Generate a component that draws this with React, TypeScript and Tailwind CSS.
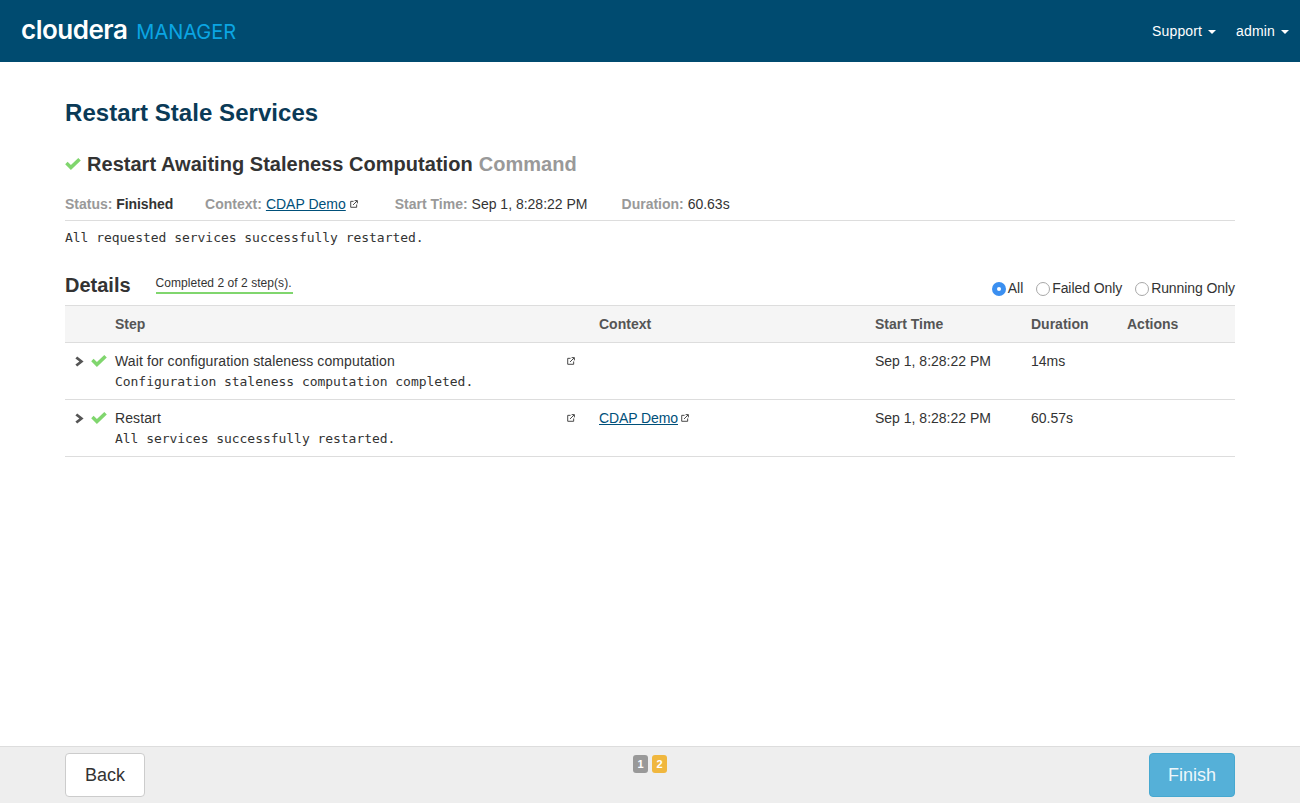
import React from 'react';

const rowGrid = 'grid grid-cols-[50px_484px_276px_156px_96px_108px]';
const mono = { fontFamily: '"DejaVu Sans Mono", monospace' };

const Check = ({ className }: { className: string }) => (
    <svg viewBox="0 0 16 12" className={className} fill="currentColor">
        <path d="M0.2 6.2 L2.6 3.8 L5.9 7 L13.3 0 L15.8 2.4 L5.9 12 Z" />
    </svg>
);

const Chevron = () => (
    <svg viewBox="0 0 9 11" className="h-[11px] w-[9px] text-[#555555]" fill="currentColor">
        <path d="M2.2 0.4 L8.6 5.5 L2.2 10.6 L0.4 8.4 L4.4 5.5 L0.4 2.6 Z" />
    </svg>
);

const ExternalLink = ({ className }: { className: string }) => (
    <svg viewBox="0 0 9 9" className={className} fill="none" stroke="currentColor" strokeWidth="1">
        <path d="M4 1.5 H0.8 V8.2 H7.5 V5" />
        <path d="M3.4 5.6 L8 1" />
        <path d="M5.2 0.7 H8.3 V3.8" />
    </svg>
);

const Caret = () => <span className="ml-[6px] inline-block border-x-[4px] border-t-[4px] border-x-transparent border-t-white align-middle" />;

const Radio = ({ label, checked }: { label: string; checked?: boolean }) => (
    <label className="flex items-center">
        {checked ? (
            <span className="flex h-[14px] w-[14px] items-center justify-center rounded-full bg-[#3b8ff0]">
                <span className="h-[4px] w-[4px] rounded-full bg-white" />
            </span>
        ) : (
            <span className="h-[14px] w-[14px] rounded-full border border-[#a8a8a8] bg-white" />
        )}
        <span className="ml-[2px] tracking-[-0.08px]">{label}</span>
    </label>
);

interface Step {
    name: string;
    message: string;
    context?: string;
    duration: string;
}

const steps: Step[] = [
    { name: 'Wait for configuration staleness computation', message: 'Configuration staleness computation completed.', duration: '14ms' },
    { name: 'Restart', message: 'All services successfully restarted.', context: 'CDAP Demo', duration: '60.57s' },
];

const Meta = ({ label, value, className }: { label: string; value: React.ReactNode; className?: string }) => (
    <span className={className}>
        <b className="font-bold text-[#999999]">{label}</b> {value}
    </span>
);

export default function App() {
    return (
        <div className="flex h-screen flex-col overflow-hidden bg-white text-[14px] text-[#333333]" style={{ fontFamily: '"Liberation Sans", Arial, sans-serif' }}>
            <header className="flex h-[62px] shrink-0 items-center justify-between bg-[#004b70] pl-[21px] pr-[11px]">
                <div className="flex items-baseline pb-[4px]" style={{ fontFamily: 'Inter, sans-serif' }}>
                    <span className="text-[26px] font-semibold tracking-[-0.5px] text-white">cloudera</span>
                    <span className="ml-[9px] text-[20px] text-[#0ba5e3]">MANAGER</span>
                </div>
                <nav className="flex items-center tracking-[0.15px] text-white">
                    <span>Support<Caret /></span>
                    <span className="ml-[20px]">admin<Caret /></span>
                </nav>
            </header>

            <main className="flex-1 px-[65px]">
                <h1 className="mt-[36px] text-[24px] leading-[30px] font-bold tracking-[0.05px] text-[#0a3a57]">Restart Stale Services</h1>

                <h2 className="mt-[21px] flex items-center text-[20px] leading-[30px] font-bold tracking-[0.03px]">
                    <Check className="mr-[6px] h-[12px] w-[16px] text-[#80d66e]" />
                    Restart Awaiting Staleness Computation
                    <span className="ml-[6px] text-[#999999]">Command</span>
                </h2>

                <div className="mt-[11px] flex h-[31px] items-center border-b border-[#dddddd] pb-[2px]">
                    <Meta label="Status:" value={<b className="font-bold tracking-[-0.1px]">Finished</b>} />
                    <Meta
                        label="Context:"
                        className="ml-[32px] flex items-center gap-[4px]"
                        value={
                            <>
                                <a className="text-[#00507a] underline">CDAP Demo</a>
                                <ExternalLink className="h-[8px] w-[8px]" />
                            </>
                        }
                    />
                    <Meta label="Start Time:" value="Sep 1, 8:28:22 PM" className="ml-[37px]" />
                    <Meta label="Duration:" value="60.63s" className="ml-[34px]" />
                </div>

                <p className="mt-[8px] text-[13px] leading-[18px] tracking-[-0.03px]" style={mono}>All requested services successfully restarted.</p>

                <div className="mt-[16px] flex h-[42px] items-center justify-between pb-[1px]">
                    <div className="flex items-center">
                        <h3 className="pt-[2px] text-[20px] font-bold">Details</h3>
                        <span className="mt-[3px] ml-[25px] border-b-2 border-[#80d66e] pr-[1px] pb-[2px] text-[12px] leading-[14px] tracking-[0.05px]">Completed 2 of 2 step(s).</span>
                    </div>
                    <div className="flex items-center gap-[13px] pt-[10px]">
                        <Radio label="All" checked />
                        <Radio label="Failed Only" />
                        <Radio label="Running Only" />
                    </div>
                </div>

                <div className={`${rowGrid} h-[38px] items-center border-y border-[#dddddd] bg-[#f5f5f5] font-bold text-[#555555]`}>
                    <span />
                    <span>Step</span>
                    <span>Context</span>
                    <span>Start Time</span>
                    <span>Duration</span>
                    <span>Actions</span>
                </div>

                {steps.map((step) => (
                    <div key={step.name} className={`${rowGrid} h-[57px] border-b border-[#dddddd] pt-[8px] leading-[20px]`}>
                        <div className="flex h-[20px] items-center pl-[10px]">
                            <Chevron />
                            <Check className="ml-[7px] h-[12px] w-[16px] text-[#80d66e]" />
                        </div>
                        <div className="pr-[24px]">
                            <div className="flex items-center justify-between">
                                <span className="tracking-[0.11px]">{step.name}</span>
                                <ExternalLink className="h-[8px] w-[8px]" />
                            </div>
                            <p className="mt-[1px] text-[13px] tracking-[-0.04px]" style={mono}>{step.message}</p>
                        </div>
                        <div>
                            {step.context && (
                                <span className="flex items-center gap-[3px]">
                                    <a className="tracking-[-0.1px] text-[#00507a] underline">{step.context}</a>
                                    <ExternalLink className="h-[8px] w-[8px]" />
                                </span>
                            )}
                        </div>
                        <span>Sep 1, 8:28:22 PM</span>
                        <span>{step.duration}</span>
                        <span />
                    </div>
                ))}
            </main>

            <footer className="relative flex h-[57px] shrink-0 items-center justify-between border-t border-[#dddddd] bg-[#eeeeee] px-[65px]">
                <button className="h-[44px] w-[80px] rounded-[4px] border border-[#cccccc] bg-white text-[18px]">Back</button>
                <div className="absolute left-[633px] top-[8px] flex gap-[4px] text-[11px] leading-[18px] font-bold text-white">
                    <span className="h-[18px] w-[15px] rounded-[3px] bg-[#999999] text-center">1</span>
                    <span className="h-[18px] w-[15px] rounded-[3px] bg-[#f0b73e] text-center">2</span>
                </div>
                <button className="h-[44px] w-[86px] rounded-[4px] border border-[#46a8d0] bg-[#55b0d8] text-[18px] text-[#eef7fb]">Finish</button>
            </footer>
        </div>
    );
}
